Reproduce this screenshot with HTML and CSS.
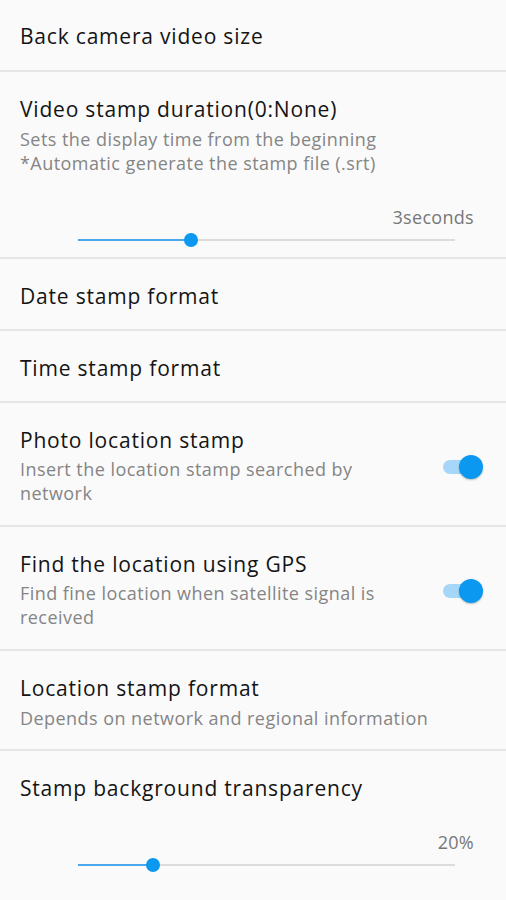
FILE: index.html
```html
<!DOCTYPE html>
<html lang="en">
<head>
  <meta charset="UTF-8" />
  <meta name="viewport" content="width=device-width, initial-scale=1" />
  <title>Stamp settings</title>
  <link rel="stylesheet" href="styles.css">
</head>
<body>
  <ul class="settings">
    <li class="item simple first">
      <div class="title">Back camera video size</div>
    </li>

    <li class="item has-slider">
      <div class="title">Video stamp duration(0:None)</div>
      <div class="summary">Sets the display time from the beginning<br>*Automatic generate the stamp file (.srt)</div>
      <div class="value">3seconds</div>
      <div class="slider">
        <div class="fill" style="width: 30%"></div>
        <div class="thumb" style="left: 30%"></div>
      </div>
    </li>

    <li class="item simple">
      <div class="title">Date stamp format</div>
    </li>

    <li class="item simple">
      <div class="title">Time stamp format</div>
    </li>

    <li class="item switch-row">
      <div class="text">
        <div class="title">Photo location stamp</div>
        <div class="summary">Insert the location stamp searched by network</div>
      </div>
      <div class="switch on"><span class="knob"></span></div>
    </li>

    <li class="item switch-row">
      <div class="text">
        <div class="title">Find the location using GPS</div>
        <div class="summary">Find fine location when satellite signal is received</div>
      </div>
      <div class="switch on"><span class="knob"></span></div>
    </li>

    <li class="item">
      <div class="title">Location stamp format</div>
      <div class="summary">Depends on network and regional information</div>
    </li>

    <li class="item has-slider last">
      <div class="title">Stamp background transparency</div>
      <div class="value">20%</div>
      <div class="slider">
        <div class="fill" style="width: 20%"></div>
        <div class="thumb" style="left: 20%"></div>
      </div>
    </li>
  </ul>
</body>
</html>
```

FILE: styles.css
```css
body {
  margin: 0;
  background-color: #fafafa;
  font-family: "Open Sans", "Noto Sans", sans-serif;
  color: #141414;
}

.settings {
  list-style: none;
  margin: 0;
  padding: 0;
}

.item {
  padding: 25px 20px 19px;
  border-bottom: 2px solid #e6e6e6;
}

.item.simple {
  padding-bottom: 21px;
}

.item.first {
  padding-top: 24px;
  padding-bottom: 22px;
}

.item.has-slider {
  padding-bottom: 6px;
}

.item.last {
  border-bottom: none;
}

.title {
  font-size: 21px;
  line-height: 24px;
  letter-spacing: 0.8px;
}

.summary {
  margin-top: 6px;
  font-size: 18px;
  line-height: 24px;
  letter-spacing: 0.45px;
  color: #858585;
}

.value {
  margin-top: 30px;
  padding-right: 12px;
  text-align: right;
  font-size: 18px;
  line-height: 24px;
  letter-spacing: 0.3px;
  color: #777;
}

.slider {
  position: relative;
  height: 22px;
  margin: 0 31px 0 58px;
}

.slider::before {
  content: "";
  position: absolute;
  left: 0;
  right: 0;
  top: 10px;
  height: 2px;
  background-color: #dcdcdc;
}

.slider .fill {
  position: absolute;
  left: 0;
  top: 10px;
  height: 2px;
  background-color: #4aa8ec;
}

.slider .thumb {
  position: absolute;
  top: 4px;
  width: 14px;
  height: 14px;
  margin-left: -7px;
  border-radius: 50%;
  background-color: #0a98f0;
}

.switch-row {
  display: flex;
  align-items: center;
  padding-right: 23px;
  padding-bottom: 20px;
}

.switch-row .text {
  flex: 1;
  max-width: 395px;
}

.switch-row .summary {
  margin-top: 5px;
}

.switch {
  position: relative;
  width: 40px;
  height: 24px;
  margin-left: auto;
}

.switch::before {
  content: "";
  position: absolute;
  left: 0;
  top: 5px;
  width: 32px;
  height: 14px;
  border-radius: 7px;
  background-color: #a6d7f8;
}

.switch .knob {
  position: absolute;
  right: 0;
  top: 0;
  width: 24px;
  height: 24px;
  border-radius: 50%;
  background-color: #0a98f0;
  box-shadow: 0 1px 2px rgba(0, 0, 0, 0.25);
}
```
